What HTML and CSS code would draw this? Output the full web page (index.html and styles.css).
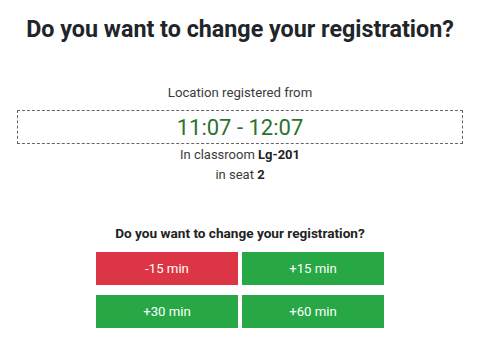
FILE: index.html
```html
<!DOCTYPE html>
<html lang="en">
<head>
<meta charset="utf-8">
<link rel="stylesheet" href="styles.css">
</head>
<body>
<main class="page">
  <h1 class="title">Do you want to change your registration?</h1>
  <p class="label">Location registered from</p>
  <div class="time-box">11:07 - 12:07</div>
  <p class="info">In classroom <b>Lg-201</b></p>
  <p class="info">in seat <b>2</b></p>
  <p class="question">Do you want to change your registration?</p>
  <div class="buttons">
    <button class="btn btn-red">-15 min</button>
    <button class="btn btn-green">+15 min</button>
    <button class="btn btn-green">+30 min</button>
    <button class="btn btn-green">+60 min</button>
  </div>
</main>
</body>
</html>
```
FILE: styles.css
```css
html, body {
  margin: 0;
  padding: 0;
  background: #fff;
}
body {
  font-family: Roboto, "Liberation Sans", sans-serif;
  color: #3b3b3b;
}
.page {
  display: flex;
  flex-direction: column;
  align-items: center;
  padding: 15px 17px 0;
}
.title {
  margin: 0;
  font-size: 23.3px;
  font-weight: 700;
  color: #212529;
  line-height: 28px;
}
.label {
  margin: 41px 0 0;
  font-size: 13.2px;
  line-height: 18px;
}
.time-box {
  margin-top: 8px;
  align-self: stretch;
  border: 1px dashed #666;
  height: 32px;
  display: flex;
  align-items: center;
  justify-content: center;
  font-size: 22px;
  color: #2b722f;
}
.info {
  margin: 2px 0 0;
  font-size: 13px;
  line-height: 18px;
}
.info + .info {
  margin-top: 2px;
}
.info b {
  color: #222;
}
.question {
  margin: 40px 0 0;
  font-size: 13.6px;
  font-weight: 700;
  color: #222;
  line-height: 18px;
}
.buttons {
  margin-top: 10px;
  display: grid;
  grid-template-columns: 142px 142px;
  column-gap: 4px;
  row-gap: 10px;
}
.btn {
  height: 33px;
  border: none;
  font-family: Roboto, "Liberation Sans", sans-serif;
  font-size: 13.2px;
  color: #fff;
  padding: 0;
}
.btn-red {
  background: #dc3545;
}
.btn-green {
  background: #28a745;
}
```
